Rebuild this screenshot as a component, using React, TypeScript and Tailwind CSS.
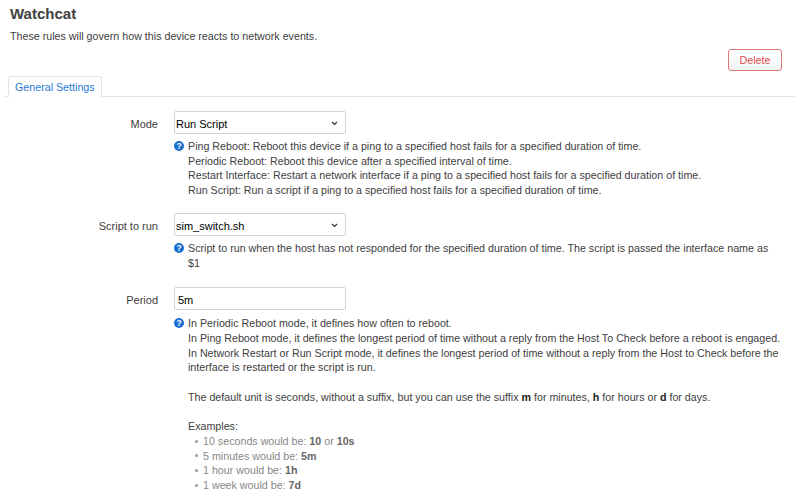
import React from "react";

function Help() {
  return (
    <svg width="10" height="10" viewBox="0 0 10 10" className="absolute left-0 top-[2px]">
      <circle cx="5" cy="5" r="5" fill="#1a6fd0" />
      <text x="5" y="8.3" textAnchor="middle" fontSize="8.5" fontWeight="bold" fill="#fff" fontFamily="Liberation Sans, Arial, sans-serif">?</text>
    </svg>
  );
}

function Chevron() {
  return (
    <svg width="7" height="5" viewBox="0 0 7 5" className="absolute right-[7px] top-[9px]">
      <path d="M1 1 L3.5 3.5 L6 1" stroke="#333" strokeWidth="1.2" fill="none" />
    </svg>
  );
}

function Row({ label, control, children, className = "", helpClass = "mt-[5px]" }: { label: string; control: React.ReactNode; children: React.ReactNode; className?: string; helpClass?: string }) {
  return (
    <div className={"flex " + className}>
      <div className="w-[158px] shrink-0 text-right pt-[5px] text-[11px] text-[#404040]">{label}</div>
      <div className="ml-[16px] flex flex-col">
        {control}
        <div className={"relative pl-[14px] w-[611px] text-[10.7px] leading-[14.7px] text-[#404040] " + helpClass}>
          <Help />
          {children}
        </div>
      </div>
    </div>
  );
}

function SelectBox({ value }: { value: string }) {
  return (
    <div className="relative w-[172px] h-[23px] border border-[#d4d4d4] rounded-[2px] bg-white text-[11px] text-black pl-[1px] pt-[4px]">
      {value}
      <Chevron />
    </div>
  );
}

function Li({ children }: { children: React.ReactNode }) {
  return (
    <div className="flex items-center">
      <span className="w-[3px] h-[3px] rounded-full bg-[#999] ml-[7px] mr-[5px]" />
      <span>{children}</span>
    </div>
  );
}

export default function App() {
  return (
    <div className="w-[800px] h-[496px] overflow-hidden bg-white font-['Liberation_Sans',Arial,sans-serif] text-[#404040]">
      <div className="px-[10px] pt-[4px]">
        <h2 className="text-[15px] font-bold text-[#404040] leading-[20px]">Watchcat</h2>
        <p className="text-[10.7px] mt-[5px] leading-[14px]">These rules will govern how this device reacts to network events.</p>
      </div>
      <div className="flex justify-end pr-[18px] mt-[6px]">
        <div className="w-[54px] h-[22px] border border-[#e07a7a] rounded-[3px] bg-gradient-to-b from-white to-[#f3f3f3] text-[#e05050] text-[10.7px] flex items-center justify-center">
          Delete
        </div>
      </div>
      <div className="mx-[5px] mt-[5px] border-b border-[#e3e3e3] flex pl-[3px]">
        <div className="h-[21px] px-[6px] border border-b-0 border-[#e3e3e3] rounded-t-[3px] bg-white text-[10.7px] text-[#2a7bd5] flex items-center -mb-px">
          General Settings
        </div>
      </div>
      <div className="mt-[14px] flex flex-col">
        <Row label="Mode" control={<SelectBox value="Run Script" />}>
          <div>Ping Reboot: Reboot this device if a ping to a specified host fails for a specified duration of time.</div>
          <div>Periodic Reboot: Reboot this device after a specified interval of time.</div>
          <div>Restart Interface: Restart a network interface if a ping to a specified host fails for a specified duration of time.</div>
          <div>Run Script: Run a script if a ping to a specified host fails for a specified duration of time.</div>
        </Row>
        <Row className="mt-[15px]" helpClass="mt-[5px]" label="Script to run" control={<SelectBox value="sim_switch.sh" />}>
          <div>Script to run when the host has not responded for the specified duration of time. The script is passed the interface name as<br />$1</div>
        </Row>
        <Row className="mt-[17px]" helpClass="mt-[6px]" label="Period" control={<div className="w-[172px] h-[23px] border border-[#d4d4d4] rounded-[2px] bg-white text-[11px] text-black pl-[3px] pt-[4px]">5m</div>}>
          <div>In Periodic Reboot mode, it defines how often to reboot.</div>
          <div>In Ping Reboot mode, it defines the longest period of time without a reply from the Host To Check before a reboot is engaged.</div>
          <div>In Network Restart or Run Script mode, it defines the longest period of time without a reply from the Host to Check before the interface is restarted or the script is run.</div>
          <div className="h-[14.7px]" />
          <div>The default unit is seconds, without a suffix, but you can use the suffix <b className="text-[#222]">m</b> for minutes, <b className="text-[#222]">h</b> for hours or <b className="text-[#222]">d</b> for days.</div>
          <div className="h-[14.7px]" />
          <div>Examples:</div>
          <div className="text-[#888]">
            <Li>10 seconds would be: <b className="text-[#666]">10</b> or <b className="text-[#666]">10s</b></Li>
            <Li>5 minutes would be: <b className="text-[#666]">5m</b></Li>
            <Li>1 hour would be: <b className="text-[#666]">1h</b></Li>
            <Li>1 week would be: <b className="text-[#666]">7d</b></Li>
          </div>
        </Row>
      </div>
    </div>
  );
}
